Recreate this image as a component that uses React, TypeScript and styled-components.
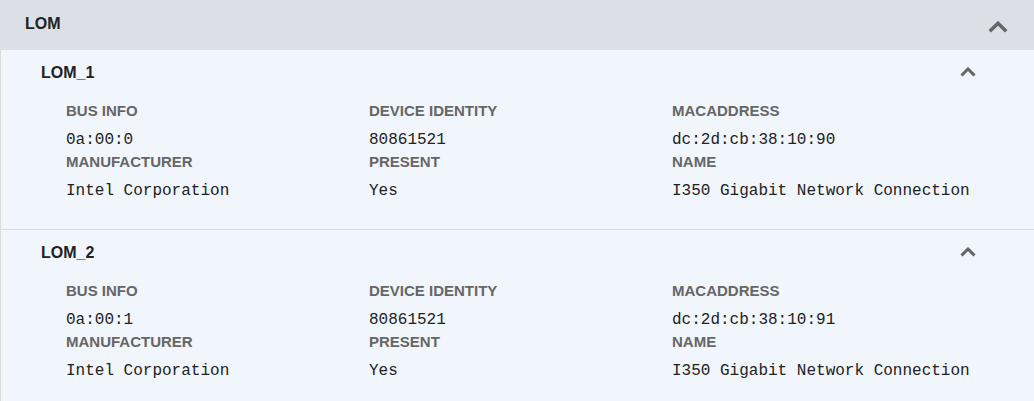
import React from "react";
import styled, { createGlobalStyle } from "styled-components";

const Global = createGlobalStyle`
  html, body { margin: 0; padding: 0; background: #f1f5fc; }
  body { font-family: "Liberation Sans", Arial, sans-serif; }
`;

const Panel = styled.div`
  width: 1034px;
  background: #f1f5fc;
`;

const Header = styled.div`
  height: 50px;
  background: #dcdfe6;
  display: flex;
  align-items: center;
  justify-content: space-between;
  padding: 0 26px 0 25px;
  box-sizing: border-box;
`;

const HeaderTitle = styled.div`
  font-size: 16px;
  font-weight: bold;
  color: #222;
  line-height: 20px;
  margin-top: -2px;
`;

const Body = styled.div`
  border-left: 1px solid #dcdcdc;
`;

const Section = styled.div<{ $last?: boolean }>`
  padding: 0 0 29px 40px;
  border-bottom: ${(p) => (p.$last ? "none" : "1px solid #dcdcdc")};
`;

const SectionHead = styled.div`
  height: 45px;
  display: flex;
  align-items: center;
  justify-content: space-between;
  padding-right: 58px;
`;

const SectionTitle = styled.div`
  font-size: 16px;
  font-weight: bold;
  color: #222;
  line-height: 20px;
`;

const Grid = styled.div`
  display: grid;
  grid-template-columns: 303px 303px 303px;
  row-gap: 4px;
  padding-left: 25px;
  margin-top: 7px;
`;

const Field = styled.div`
  display: flex;
  flex-direction: column;
`;

const Label = styled.div`
  font-size: 15px;
  font-weight: bold;
  color: #666;
  line-height: 18px;
`;

const Value = styled.div`
  font-family: "Liberation Mono", "Courier New", monospace;
  font-size: 16px;
  color: #222;
  line-height: 18px;
  margin-top: 11px;
`;

const Chevron = ({ size }: { size: "big" | "small" }) => {
  const w = size === "big" ? 20 : 16;
  const h = size === "big" ? 12 : 10;
  const sw = size === "big" ? 3.6 : 3;
  return (
    <svg width={w} height={h} viewBox={`0 0 ${w} ${h}`} style={{ display: "block" }}>
      <polyline
        points={`${sw / 2},${h - sw / 2} ${w / 2},${sw / 2 + 0.5} ${w - sw / 2},${h - sw / 2}`}
        fill="none"
        stroke="#666"
        strokeWidth={sw}
        strokeLinecap="butt"
        strokeLinejoin="miter"
      />
    </svg>
  );
};

const BigChevronWrap = styled.div`
  margin-top: 3px;
`;

const SmallChevronWrap = styled.div`
  margin-top: -1px;
`;

type Lom = { name: string; bus: string; mac: string };

const loms: Lom[] = [
  { name: "LOM_1", bus: "0a:00:0", mac: "dc:2d:cb:38:10:90" },
  { name: "LOM_2", bus: "0a:00:1", mac: "dc:2d:cb:38:10:91" },
];

export default function App() {
  return (
    <>
      <Global />
      <Panel>
        <Header>
          <HeaderTitle>LOM</HeaderTitle>
          <BigChevronWrap>
            <Chevron size="big" />
          </BigChevronWrap>
        </Header>
        <Body>
          {loms.map((l, i) => (
            <Section key={l.name} $last={i === loms.length - 1}>
              <SectionHead>
                <SectionTitle>{l.name}</SectionTitle>
                <SmallChevronWrap>
                  <Chevron size="small" />
                </SmallChevronWrap>
              </SectionHead>
              <Grid>
                <Field>
                  <Label>BUS INFO</Label>
                  <Value>{l.bus}</Value>
                </Field>
                <Field>
                  <Label>DEVICE IDENTITY</Label>
                  <Value>80861521</Value>
                </Field>
                <Field>
                  <Label>MACADDRESS</Label>
                  <Value>{l.mac}</Value>
                </Field>
                <Field>
                  <Label>MANUFACTURER</Label>
                  <Value>Intel Corporation</Value>
                </Field>
                <Field>
                  <Label>PRESENT</Label>
                  <Value>Yes</Value>
                </Field>
                <Field>
                  <Label>NAME</Label>
                  <Value>I350 Gigabit Network Connection</Value>
                </Field>
              </Grid>
            </Section>
          ))}
        </Body>
      </Panel>
    </>
  );
}
